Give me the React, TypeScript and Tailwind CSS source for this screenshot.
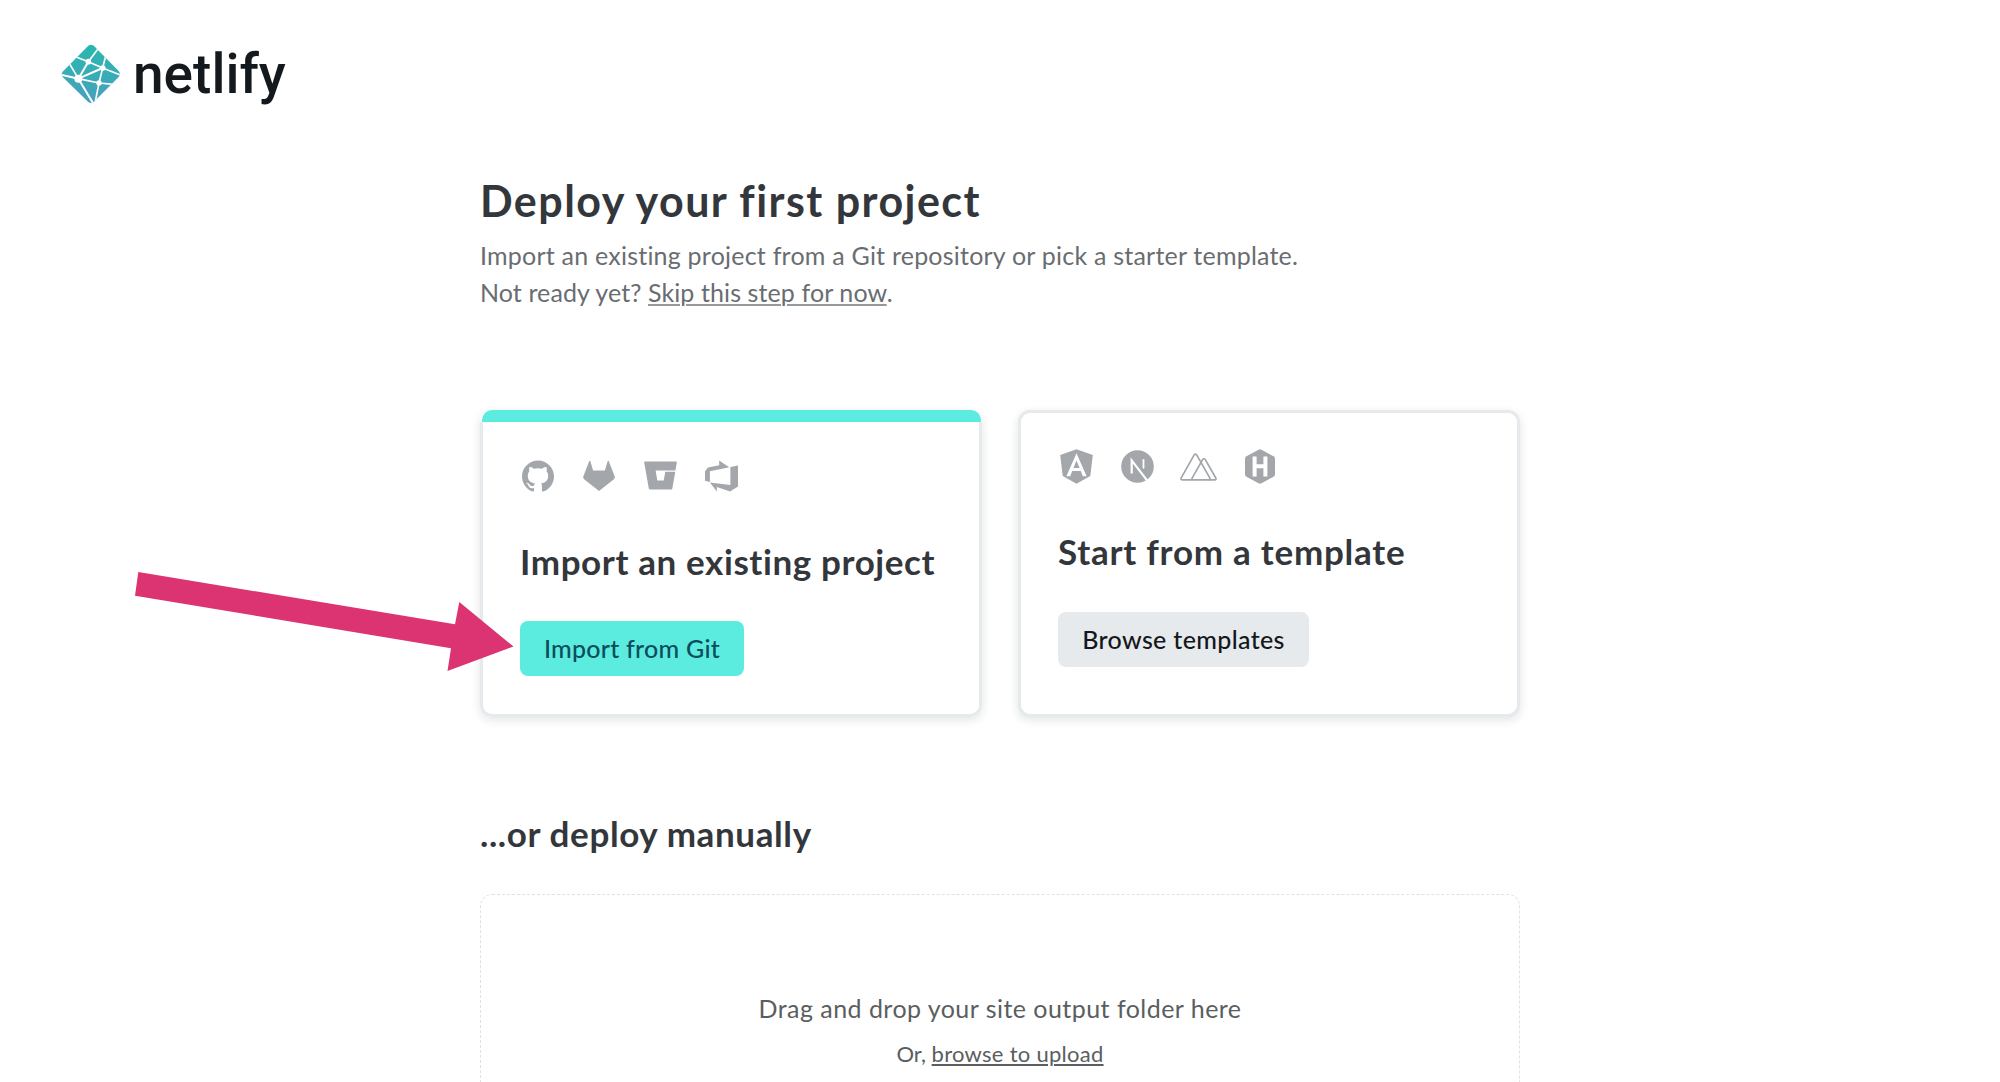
import type { ReactNode } from "react";
import { SiGithub } from "react-icons/si";

function NetlifyMark() {
  return (
    <svg viewBox="15 12 180 180" className="h-[60px] w-[60px] shrink-0">
      <defs>
        <linearGradient id="mark" x1="0" y1="0" x2="0" y2="1">
          <stop offset="0" stopColor="#27b9ae" />
          <stop offset="1" stopColor="#4a9fbe" />
        </linearGradient>
        <clipPath id="diamond">
          <path d="M96 18Q105 10 114 18L188 93Q195 102 188 111L114 185Q105 193 96 185L20 111Q13 103 20 95Z" />
        </clipPath>
      </defs>
      <g clipPath="url(#diamond)">
        <rect x="10" y="10" width="190" height="190" fill="url(#mark)" />
        <g stroke="#fff" strokeWidth="5" fill="none">
          <path d="M55 49L97 65L140 84L200 108" />
          <path d="M97 65L128 24" />
          <path d="M67 116L97 65" strokeWidth="6" />
          <path d="M67 116L140 84" strokeWidth="6" />
          <path d="M140 84L150 44" />
          <path d="M140 84L129 129L117 190" />
          <path d="M67 116L129 129L180 134" />
          <path d="M67 116L40 70" />
          <path d="M67 116L10 103" strokeWidth="6" />
          <path d="M67 116L114 194" strokeWidth="6" />
        </g>
        <circle cx="67" cy="116" r="12" fill="#fff" />
        <circle cx="97" cy="65" r="8.5" fill="#fff" />
        <circle cx="140" cy="84" r="8.5" fill="#fff" />
        <circle cx="129" cy="129" r="8" fill="#fff" />
      </g>
    </svg>
  );
}

function GitlabIcon() {
  return (
    <svg viewBox="0 0 32 32" className="h-8 w-8" fill="currentColor">
      <path d="M6.3 .9Q6.8 .4 7.3 .9L10.1 10.4H21.9L24.7 .9Q25.2 .4 25.7 .9L31.7 16.4Q32.1 18 30.9 19.2L16 31L1.1 19.2Q-.1 18 .3 16.4Z" />
    </svg>
  );
}

function BitbucketIcon() {
  return (
    <svg viewBox="0 0 33 29" className="h-[29px] w-[33px]" fill="currentColor">
      <path
        fillRule="evenodd"
        d="M.9 .5H32.1Q33 .5 32.8 1.5L31.4 9.4H11.6L13.3 19.4H19.7L21.3 10.7H31.3L28.3 27.6Q28.1 28.5 27.2 28.5H5.9Q5 28.5 4.8 27.6L.2 1.5Q0 .5 .9 .5Z"
      />
    </svg>
  );
}

function AzureIcon() {
  return (
    <svg viewBox="0 0 33 32" className="h-8 w-[33px]" fill="currentColor">
      <path d="M0 11.3L3 7.4L14.2 5.3V.4L24.2 7.2L4.9 11.2V22.1L0 20.8Z" />
      <path d="M25.4 7.1L33 5.6V26.6L25 31.6L11.8 27V31.6L4.9 22.6L25.4 25.1Z" />
    </svg>
  );
}

function AngularIcon() {
  return (
    <svg viewBox="0 0 33 35" className="h-[35px] w-[33px]" fill="currentColor">
      <path
        fillRule="evenodd"
        d="M16.5 .2L32.8 6L30.3 27L16.5 34.7L2.7 27L.2 6ZM16.5 4.3L6.4 27.2H10.2L12.2 22H20.8L22.8 27.2H26.6ZM16.5 11.4L19.6 18.9H13.4Z"
      />
    </svg>
  );
}

function NextIcon() {
  return (
    <svg viewBox="0 0 33 33" className="h-[33px] w-[33px]">
      <circle cx="16.5" cy="16.5" r="16.3" fill="currentColor" />
      <g fill="none" stroke="#fff">
        <path d="M10.7 23.4V10.4L27 31.6" strokeWidth="2.2" />
        <path d="M22.5 9.2V18.5" strokeWidth="1.8" />
      </g>
    </svg>
  );
}

function NuxtIcon() {
  return (
    <svg viewBox="0 0 37 28" className="h-7 w-[37px]" fill="none" stroke="currentColor" strokeWidth="1.7" strokeLinejoin="round">
      <path d="M12.6 26.8H2.2Q.4 26.6 1.2 24.9L14.2 1.9Q15.5 .3 16.7 1.9L21.1 9.6" />
      <path d="M12.6 26.8Q11.4 26.4 12.4 24.6L22.6 6.6Q24 4.9 25.3 6.6L35.8 25Q36.5 26.6 34.8 26.8Z" />
      <path d="M21.1 9.6L29.8 24.9Q30.4 26.5 29 26.8" />
    </svg>
  );
}

function HugoIcon() {
  return (
    <svg viewBox="0 0 30 35" className="h-[35px] w-[30px]">
      <path
        fill="currentColor"
        d="M13.5 .7Q15 -.1 16.5 .7L28.5 7.3Q30 8.2 30 9.8V25.2Q30 26.8 28.5 27.7L16.5 34.3Q15 35.1 13.5 34.3L1.5 27.7Q0 26.8 0 25.2V9.8Q0 8.2 1.5 7.3Z"
      />
      <path d="M9.6 7.6V27.4M20.4 7.6V27.4M9.6 17.2H20.4" stroke="#fff" strokeWidth="4" fill="none" />
    </svg>
  );
}

function IconRow({ children }: { children: ReactNode }) {
  return <div className="flex h-[35px] items-center pl-0.5 text-[#a3a7ab]">{children}</div>;
}

function ProviderCard() {
  return (
    <section className="flex h-[307px] w-[502px] flex-col rounded-[12px] shadow-[0_3px_10px_rgba(14,30,37,0.12)]">
      <div className="mx-[1.5px] h-3 rounded-t-[10px] bg-[#5cebdf]" />
      <div className="flex-1 rounded-b-[12px] border-3 border-t-0 border-[#e6eaed] bg-white px-[37px] pt-9">
        <IconRow>
          <SiGithub className="h-8 w-8" />
          <div className="ml-[29px]">
            <GitlabIcon />
          </div>
          <div className="ml-[29px]">
            <BitbucketIcon />
          </div>
          <div className="ml-7">
            <AzureIcon />
          </div>
        </IconRow>
        <h2 className="mt-[46px] text-[35px] leading-[44px] font-bold tracking-[0.6px] whitespace-nowrap text-[#33373c]">
          Import an existing project
        </h2>
        <button className="mt-[38px] flex h-[55px] w-[224px] items-center justify-center rounded-[8px] bg-[#5cebdf] text-[25px] font-medium tracking-[0.25px] whitespace-nowrap text-[#0b4d5c]">
          Import from Git
        </button>
      </div>
    </section>
  );
}

function TemplateCard() {
  return (
    <section className="h-[307px] w-[502px] rounded-[12px] border-3 border-[#e6eaed] bg-white px-[37px] pt-9 shadow-[0_3px_10px_rgba(14,30,37,0.12)]">
      <IconRow>
        <AngularIcon />
        <div className="ml-7">
          <NextIcon />
        </div>
        <div className="ml-[26px]">
          <NuxtIcon />
        </div>
        <div className="ml-7">
          <HugoIcon />
        </div>
      </IconRow>
      <h2 className="mt-[45px] text-[35px] leading-[44px] font-bold tracking-[0.75px] whitespace-nowrap text-[#33373c]">
        Start from a template
      </h2>
      <button className="mt-[39px] flex h-[55px] w-[251px] items-center justify-center rounded-[8px] bg-[#e6eaed] text-[25px] font-medium tracking-[0.35px] whitespace-nowrap text-[#14181c]">
        Browse templates
      </button>
    </section>
  );
}

function Arrow() {
  return (
    <svg viewBox="130 565 390 115" className="absolute top-[565px] left-[130px] h-[115px] w-[390px]">
      <path d="M138.3 572L455 624.3L459.3 602L513.5 646.5L447.5 671L451 648.2L135 595.7Z" fill="#dc3373" />
    </svg>
  );
}

export default function App() {
  return (
    <div className="relative h-[1082px] w-[2000px] overflow-hidden bg-white font-['Lato',sans-serif]">
      <header className="flex h-[104px] items-center gap-3 pt-11 pl-[61px]">
        <NetlifyMark />
        <span className="font-['Roboto',sans-serif] text-[55px] leading-[60px] font-medium text-[#14191e]">netlify</span>
      </header>
      <main className="mx-auto w-[1040px] pt-[71px]">
        <h1 className="text-[43px] leading-[52px] font-bold tracking-[1.45px] text-[#33373c]">Deploy your first project</h1>
        <div className="mt-2.5 text-[25px] leading-[37px] whitespace-nowrap text-[#696d71]">
          <p className="tracking-[0.22px]">
            Import an existing project from a Git repository or pick a starter template.
          </p>
          <p className="tracking-[0.1px]">
            Not ready yet?{" "}
            <a className="underline decoration-[#95999c] decoration-2 underline-offset-[2px]">Skip this step for now</a>.
          </p>
        </div>
        <div className="mt-[99px] flex gap-9">
          <ProviderCard />
          <TemplateCard />
        </div>
        <h2 className="mt-[94px] text-[35px] leading-[44px] font-bold tracking-[0.62px] text-[#33373c]">...or deploy manually</h2>
        <section className="mt-[39px] h-[380px] rounded-[12px] border border-dashed border-[#dfe2e4] pt-[95px] text-center text-[#5a5e60]">
          <p className="text-[25px] leading-[36px] tracking-[0.46px]">Drag and drop your site output folder here</p>
          <p className="mt-3 text-[22px] leading-[32px]">
            Or,{" "}
            <a className="tracking-[0.27px] underline decoration-2 underline-offset-[2px]">browse to upload</a>
          </p>
        </section>
      </main>
      <Arrow />
    </div>
  );
}
